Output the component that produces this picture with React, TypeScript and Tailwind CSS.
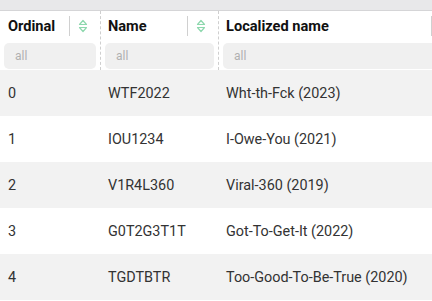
const rows = [
  { ordinal: 0, name: "WTF2022", localized: "Wht-th-Fck (2023)" },
  { ordinal: 1, name: "IOU1234", localized: "I-Owe-You (2021)" },
  { ordinal: 2, name: "V1R4L360", localized: "Viral-360 (2019)" },
  { ordinal: 3, name: "G0T2G3T1T", localized: "Got-To-Get-It (2022)" },
  { ordinal: 4, name: "TGDTBTR", localized: "Too-Good-To-Be-True (2020)" },
];

function SortIcon() {
  return (
    <svg width="10" height="14" viewBox="0 0 10 14" fill="none" stroke="#8ed8ae" strokeWidth="1.2" strokeLinejoin="round">
      <path d="M5 1.5 L8.5 5.5 H1.5 Z" />
      <path d="M1.5 8.5 H8.5 L5 12.5 Z" />
    </svg>
  );
}

function HeaderCell({ title, sortable, w, pad, last }: { title: string; sortable?: boolean; w: string; pad: string; last?: boolean }) {
  return (
    <div className={`flex flex-col shrink-0 ${w} ${last ? "" : "border-r border-dashed border-[#cfcfcf]"}`}>
      <div className={`flex items-center h-[30px] ${pad} pr-1`}>
        <span className="font-bold text-[14.6px] text-[#111] flex-1 pt-[2px]">{title}</span>
        <div className="w-px h-[20px] bg-[#d0d0d0]" />
        {sortable ? (
          <div className="w-[26px] flex justify-center">
            <SortIcon />
          </div>
        ) : (
          <div className="w-[4px]" />
        )}
      </div>
      <div className="px-1 pt-[2px] pb-[1px]">
        <div className="h-[26px] rounded-[5px] bg-[#f0f0f0] flex items-center px-[11px] text-[12px] text-[#b0b0b0]">all</div>
      </div>
    </div>
  );
}

export default function App() {
  return (
    <div className="w-[432px] h-[301px] overflow-hidden bg-white font-['Roboto',sans-serif]">
      <div className="h-[11px] bg-[#e8e8ea] border-b border-[#d5d5d7]" />
      <div className="flex h-[59px] w-[440px]">
        <HeaderCell title="Ordinal" sortable w="w-[101px]" pad="pl-2" />
        <HeaderCell title="Name" sortable w="w-[118px]" pad="pl-[7px]" />
        <HeaderCell title="Localized name" w="w-[221px]" pad="pl-[7px]" last />
      </div>
      {rows.map((r, i) => (
        <div key={r.ordinal} className={`flex h-[46px] items-center pt-[2px] text-[14.4px] text-[#333] ${i % 2 === 0 ? "bg-[#f2f2f2]" : "bg-white"}`}>
          <div className="w-[101px] pl-2">{r.ordinal}</div>
          <div className="w-[118px] pl-[7px]">{r.name}</div>
          <div className="pl-[7px]">{r.localized}</div>
        </div>
      ))}
    </div>
  );
}
